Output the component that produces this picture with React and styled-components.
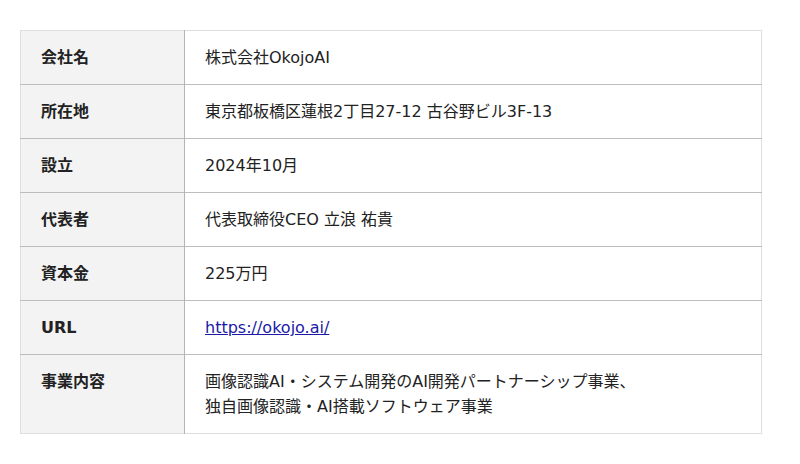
import styled, { createGlobalStyle } from "styled-components"

export default App

const GlobalStyle = createGlobalStyle`
   body {
      margin: 0;
      background: #fff;
      font-family: "DejaVu Sans", "Noto Sans CJK JP", sans-serif;
      color: #222;
   }
`
const Page = styled.div`
   padding: 30px 20px;
`
const Table = styled.table`
   width: 742px;
   border-collapse: collapse;
   border: 1px solid #dedede;
   font-size: 16px;
   line-height: 25px;
`
const Row = styled.tr`
   border-bottom: 1px solid #bdbdbd;
   &:last-child {
      border-bottom: 1px solid #dedede;
   }
`
const Label = styled.th`
   width: 123px;
   padding: 14px 20px;
   background: #f3f3f3;
   border-right: 1px solid #b5b5b5;
   text-align: left;
   vertical-align: top;
   font-weight: bold;
   color: #222;
`
const Value = styled.td`
   padding: 14px 20px;
   text-align: left;
   vertical-align: top;
   color: #222;
`
const Link = styled.a`
   color: #1a1aa6;
   text-decoration: underline;
`

const rows = [
   ["会社名", "株式会社OkojoAI"],
   ["所在地", "東京都板橋区蓮根2丁目27-12 古谷野ビル3F-13"],
   ["設立", "2024年10月"],
   ["代表者", "代表取締役CEO 立浪 祐貴"],
   ["資本金", "225万円"],
   ["URL", <Link href="https://okojo.ai/">https://okojo.ai/</Link>],
   [
      "事業内容",
      <>
         画像認識AI・システム開発のAI開発パートナーシップ事業、
         <br />
         独自画像認識・AI搭載ソフトウェア事業
      </>,
   ],
]

function App() {
   return (
      <Page>
         <GlobalStyle />
         <Table>
            <tbody>
               {rows.map(([label, value]) => (
                  <Row key={label}>
                     <Label>{label}</Label>
                     <Value>{value}</Value>
                  </Row>
               ))}
            </tbody>
         </Table>
      </Page>
   )
}
